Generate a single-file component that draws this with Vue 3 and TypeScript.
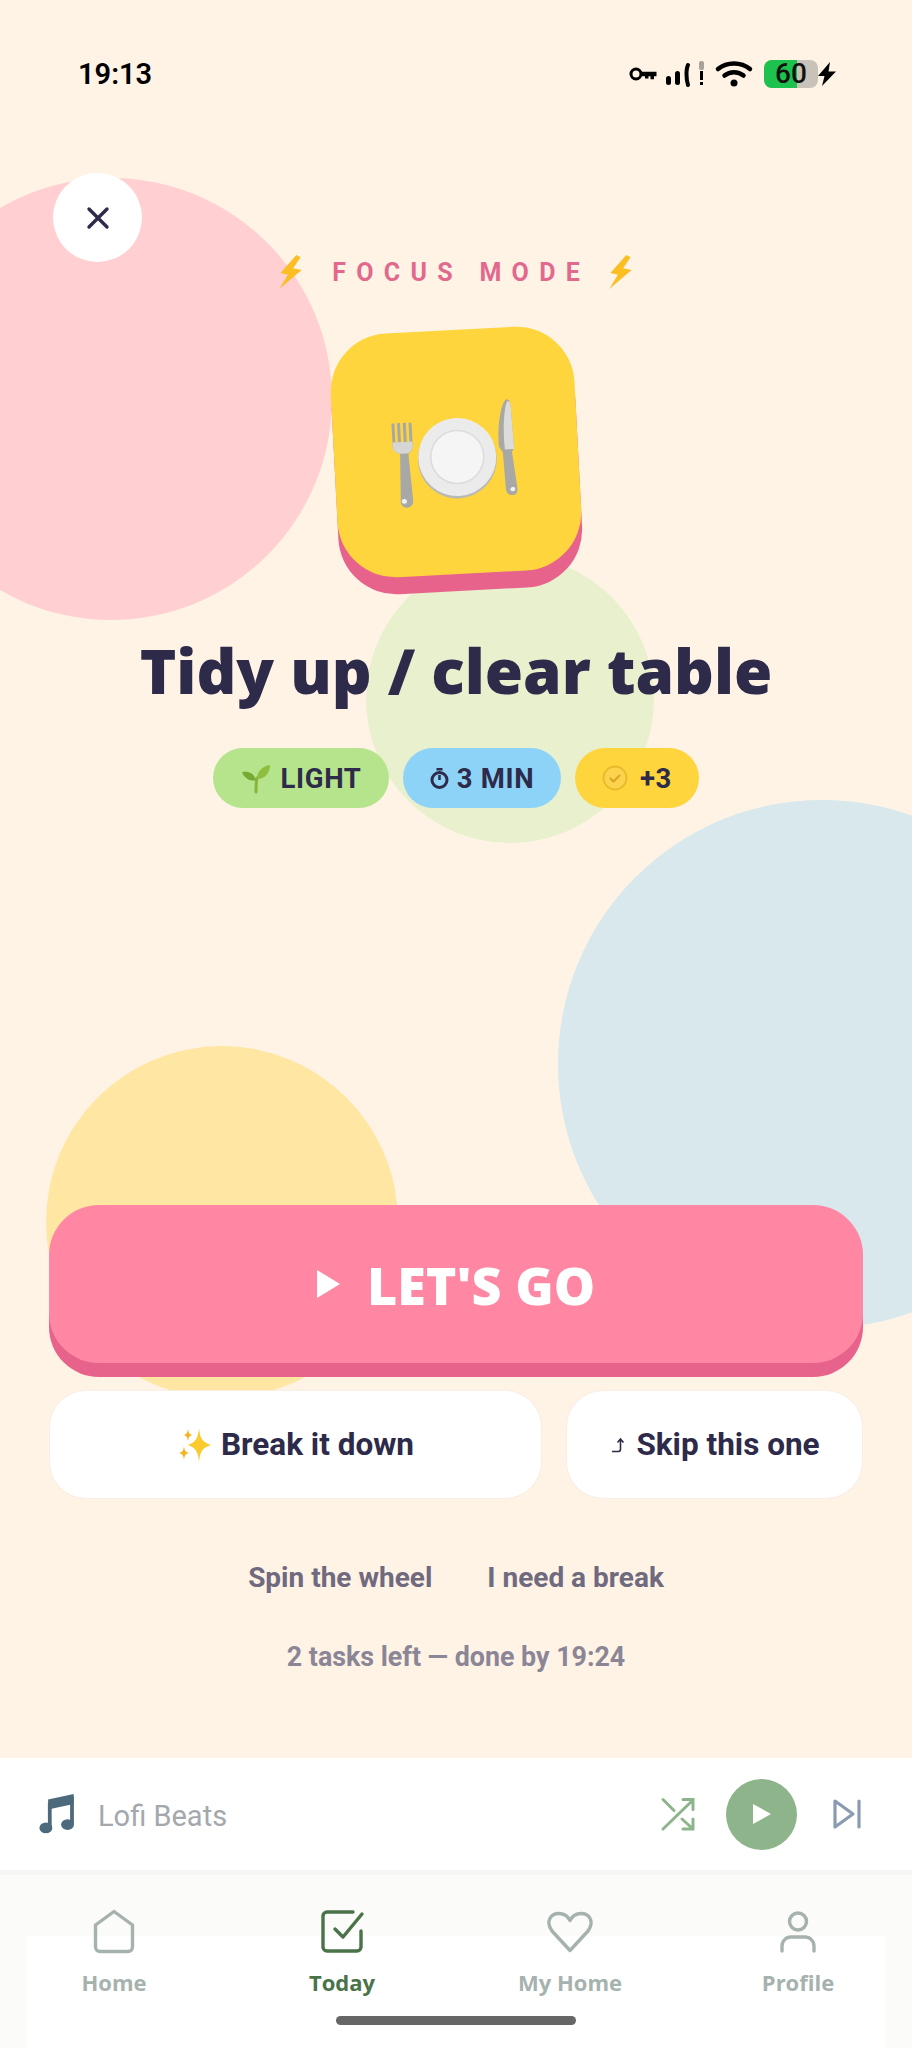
<script setup lang="ts">
const chips = [
  { label: 'LIGHT', kind: 'light', icon: 'sprout' },
  { label: '3 MIN', kind: 'time', icon: 'watch' },
  { label: '+3', kind: 'coin', icon: 'coin' },
];

const tabs = [
  { label: 'Home', icon: 'home', active: false },
  { label: 'Today', icon: 'today', active: true },
  { label: 'My Home', icon: 'heart', active: false },
  { label: 'Profile', icon: 'user', active: false },
];
</script>

<template>
  <div class="screen">
    <span class="blob blob-pink" />
    <span class="blob blob-green" />
    <span class="blob blob-blue" />
    <span class="blob blob-yellow" />

    <header class="status">
      <span class="clock">19:13</span>
      <div class="status-icons">
        <svg width="28" height="18" viewBox="0 0 28 18">
          <circle cx="7" cy="9" r="5" fill="none" stroke="#000" stroke-width="3" />
          <path d="M11 6.800h16.500v4.400H25v3h-3.500v-3h-2v2.200H16v-2.200h-5z" fill="#000" />
        </svg>
        <svg width="40" height="26" viewBox="0 0 40 26">
          <rect x="0" y="15" width="5" height="9" rx="2.500" fill="#000" />
          <rect x="9" y="10" width="5" height="14" rx="2.500" fill="#000" />
          <path d="M22 4c-2 4-2 14 0 20" fill="none" stroke="#000" stroke-width="4" stroke-linecap="round" />
          <rect x="33" y="0" width="5" height="9" rx="2" fill="#a9a29b" />
          <rect x="34" y="10" width="3" height="9" fill="#000" />
          <rect x="34" y="21" width="3" height="3" fill="#000" />
        </svg>
        <svg width="38" height="28" viewBox="0 0 38 28">
          <path d="M3 9c9-7.500 23-7.500 32 0M9.500 15.500c5.500-4.500 13.500-4.500 19 0" fill="none" stroke="#000" stroke-width="4.500" stroke-linecap="round" />
          <circle cx="19" cy="23" r="3.500" fill="#000" />
        </svg>
        <div class="battery"><span class="battery-fill" /><span class="battery-num">60</span></div>
        <svg class="bolt" width="18" height="24" viewBox="0 0 18 24"><path d="M12 0 0 14h6.500L4 24 18 9.500h-7.500z" fill="#000" /></svg>
      </div>
    </header>

    <button class="close" aria-label="Close">
      <svg width="24" height="24" viewBox="0 0 24 24"><path d="M3 3l18 18M21 3 3 21" stroke="#2d2a4a" stroke-width="3.400" stroke-linecap="round" /></svg>
    </button>

    <main class="focus">
      <div class="mode">
        <svg width="28" height="34" viewBox="0 0 26 32"><path d="M18 0 3 17l7 1.500L2 32l21-18-8-1.500L22 2z" fill="#fbbf24" /></svg>
        <span>FOCUS MODE</span>
        <svg width="28" height="34" viewBox="0 0 26 32"><path d="M18 0 3 17l7 1.500L2 32l21-18-8-1.500L22 2z" fill="#fbbf24" /></svg>
      </div>

      <div class="tile">
        <svg class="plate-set" width="120" height="100" viewBox="0 0 120 100">
          <!-- fork -->
          <g transform="translate(-3 -6) scale(1.18 1.06)">
            <path d="M0 20h2.500v18h2.200V20h2.600v18h2.300V20h2.600v18h2.300V20H17v22c0 4-2 6-4 7l2 44c.4 4-2 7-5.500 7S4 97 4.500 93L6 49c-3-1-6-3-6-7z" fill="#a8a8a6" />
            <path d="M0 38h17v4c0 4-2 6-5 7H6c-3-1-6-3-6-7z" fill="#d6d6d4" />
            <circle cx="7.500" cy="94" r="2.200" fill="#f1f1f1" />
          </g>
          <!-- plate -->
          <circle cx="61" cy="54" r="39.500" fill="#b9b9b5" />
          <circle cx="61" cy="52" r="39" fill="#ebebeb" />
          <circle cx="61" cy="52" r="26.500" fill="#f5f5f5" stroke="#dcdcdc" stroke-width="1.600" />
          <!-- knife -->
          <g transform="translate(-14 -3) scale(1.15 1)">
            <path d="M110 0c3 0 4 3 4 8l1 41-2 4 3 36c.5 4-1 7-4.500 7S106 93 106 89l-1-36-3-6c-1-14 2-40 8-47z" fill="#a8a8a6" />
            <path d="M111 2c3 0 3 3 3 7l1 41h-8c-1-13 0-38 4-48z" fill="#dcdcda" />
            <circle cx="112" cy="90" r="2.200" fill="#f1f1f1" />
          </g>
        </svg>
      </div>

      <h1 class="title">Tidy up / clear table</h1>

      <div class="chips">
        <span v-for="chip in chips" :key="chip.label" class="chip" :class="`chip-${chip.kind}`">
          <svg v-if="chip.icon === 'sprout'" width="32" height="30" viewBox="0 0 30 30">
            <path d="M15 29c0-8 0-10 1-14" fill="none" stroke="#8ab33a" stroke-width="3" stroke-linecap="round" />
            <path d="M15 17C12 9 7 8 1 9c2 6 8 10 14 8z" fill="#77a832" />
            <path d="M16 16c0-8 6-13 13-14 0 8-5 14-13 14z" fill="#8fbd3e" />
          </svg>
          <svg v-else-if="chip.icon === 'watch'" width="19" height="21" viewBox="0 0 19 21">
            <circle cx="9.500" cy="12" r="7.500" fill="none" stroke="#2d2a4a" stroke-width="3" />
            <rect x="6.500" y="0" width="6" height="2.500" fill="#2d2a4a" />
            <path d="M9.500 7v5" stroke="#2d2a4a" stroke-width="2.500" />
          </svg>
          <svg v-else width="26" height="26" viewBox="0 0 26 26">
            <circle cx="13" cy="13" r="11.500" fill="#fcd34d" stroke="#e9b92c" stroke-width="1.800" />
            <path d="M8.500 13.500l3 3 6-6" fill="none" stroke="#d9a520" stroke-width="2" stroke-linecap="round" stroke-linejoin="round" />
          </svg>
          {{ chip.label }}
        </span>
      </div>
    </main>

    <section class="actions">
      <button class="go">
        <svg width="23" height="28" viewBox="0 0 23 28"><path d="M0 0l23 14L0 28z" fill="#fff" /></svg>
        LET'S GO
      </button>
      <div class="secondary">
        <button class="ghost ghost-wide">
          <svg width="36" height="36" viewBox="0 0 34 36">
            <path d="M21 1c1 10 3 14 12 17-9 3-11 7-12 17-1-10-3-14-11-17 8-3 10-7 11-17z" fill="#fbcb2e" />
            <path d="M10 2c.6 4 1.600 5 4 6-2.400 1-3.400 2-4 6-.6-4-1.600-5-4-6 2.400-1 3.400-2 4-6z" fill="#f5b324" />
            <path d="M6 19c.6 5 1.600 6 5 7-3.400 1-4.400 2-5 7-.6-5-1.600-6-5-7 3.400-1 4.400-2 5-7z" fill="#f5b324" />
          </svg>
          Break it down
        </button>
        <button class="ghost ghost-narrow">
          <svg width="16" height="16" viewBox="0 0 16 16"><path d="M0 14.500h6.500c1.500 0 2-1 2-2.500V3M5.500 5.500 8.500 2l3 3.500" fill="none" stroke="#2d2a4a" stroke-width="1.600" /></svg>
          Skip this one
        </button>
      </div>
      <div class="links">
        <span>Spin the wheel</span>
        <span>I need a break</span>
      </div>
      <p class="left">2 tasks left — done by 19:24</p>
    </section>

    <section class="player">
      <svg width="36" height="40" viewBox="0 0 32 36">
        <path d="M8 5 31 0v9L8 14z" fill="#4d6a7d" />
        <path d="M9.500 8v22M29.500 2v25" stroke="#4d6a7d" stroke-width="3.400" />
        <ellipse cx="6" cy="30.500" rx="5.800" ry="4.800" fill="#4d6a7d" />
        <ellipse cx="25.500" cy="27.500" rx="5.800" ry="4.800" fill="#4d6a7d" />
      </svg>
      <span class="track">Lofi Beats</span>
      <svg width="34" height="34" viewBox="0 0 34 34">
        <path d="M2 32 32 3M22 2.500h10v10M2 2.500l11 11M21 22l11 10M32 22v10H22" fill="none" stroke="#8db48a" stroke-width="3" stroke-linecap="round" />
      </svg>
      <button class="play" aria-label="Play">
        <svg width="18" height="20" viewBox="0 0 18 20"><path d="M0 0l18 10L0 20z" fill="#fff" /></svg>
      </button>
      <svg width="30" height="32" viewBox="0 0 30 32">
        <path d="M3 3l18 13L3 29z" fill="none" stroke="#8a9ab3" stroke-width="3.200" stroke-linejoin="round" />
        <path d="M27 3v26" stroke="#8a9ab3" stroke-width="3.200" stroke-linecap="round" />
      </svg>
    </section>

    <nav class="tabs">
      <span class="sheet" />
      <div v-for="tab in tabs" :key="tab.label" class="tab" :class="{ active: tab.active }">
        <svg width="44" height="46" viewBox="0 0 44 46" fill="none" stroke="currentColor" stroke-width="3.400" stroke-linejoin="round" stroke-linecap="round">
          <path v-if="tab.icon === 'home'" d="M3.500 16 22 2.500 40.500 16v22a4.500 4.500 0 0 1-4.500 4.500H8A4.500 4.500 0 0 1 3.500 38z" />
          <template v-else-if="tab.icon === 'today'">
            <path d="M41 22v16a4 4 0 0 1-4 4H7a4 4 0 0 1-4-4V7a4 4 0 0 1 4-4h26" />
            <path d="M15 20l8 8L42 5" />
          </template>
          <path v-else-if="tab.icon === 'heart'" d="M22 41.500 4 22C-3 12 3 4.500 11 4.500c5 0 9 3 11 7 2-4 6-7 11-7 8 0 14 7.500 7 17.500z" />
          <template v-else>
            <circle cx="22" cy="12.500" r="8.500" />
            <path d="M6 42v-5c0-5 4-9 9-9h14c5 0 9 4 9 9v5" />
          </template>
        </svg>
        <span>{{ tab.label }}</span>
      </div>
      <span class="home-bar" />
    </nav>
  </div>
</template>

<style>
html,
body {
  margin: 0;
  background: #fff;
}
</style>

<style scoped>
.screen {
  position: relative;
  width: 912px;
  height: 2048px;
  overflow: hidden;
  background: #fff3e6;
  font-family: Roboto, "Liberation Sans", sans-serif;
  color: #2d2a4a;
  display: flex;
  flex-direction: column;
}
button {
  border: 0;
  font: inherit;
  color: inherit;
  padding: 0;
}
svg {
  overflow: visible;
  flex: none;
}
.blob {
  position: absolute;
  border-radius: 50%;
}
.blob-pink {
  left: -110px;
  top: 178px;
  width: 442px;
  height: 442px;
  background: #ffcfd2;
}
.blob-green {
  left: 366px;
  top: 555px;
  width: 288px;
  height: 288px;
  background: #e8f0cd;
}
.blob-blue {
  left: 558px;
  top: 800px;
  width: 528px;
  height: 528px;
  background: #d8e8ec;
}
.blob-yellow {
  left: 46px;
  top: 1046px;
  width: 352px;
  height: 352px;
  background: #ffe7a3;
}
.status {
  position: relative;
  height: 178px;
  flex: none;
  display: flex;
  justify-content: space-between;
  align-items: flex-start;
  padding: 56px 76px 0 78px;
  box-sizing: border-box;
}
.clock {
  font-size: 29px;
  font-weight: 600;
  line-height: 36px;
  color: #000;
}
.status-icons {
  display: flex;
  align-items: center;
  gap: 9px;
  height: 36px;
}
.battery {
  position: relative;
  width: 54px;
  height: 28px;
  border-radius: 8px;
  background: #c9c2b9;
  margin-left: 2px;
  text-align: center;
  font-size: 28px;
  line-height: 28px;
  font-weight: 500;
  color: #111;
}
.battery-fill {
  position: absolute;
  left: 0;
  top: 0;
  bottom: 0;
  width: 33px;
  border-radius: 8px 0 0 8px;
  background: #1cc24d;
}
.battery-num {
  position: relative;
}
.bolt {
  margin-left: -9px;
}
.close {
  position: absolute;
  left: 53px;
  top: 173px;
  width: 89px;
  height: 89px;
  border-radius: 50%;
  background: #fff;
  display: flex;
  align-items: center;
  justify-content: center;
}
.focus {
  position: relative;
  height: 630px;
  flex: none;
  display: flex;
  flex-direction: column;
  align-items: center;
}
.mode {
  margin-top: 77px;
  display: flex;
  align-items: center;
  gap: 27px;
  height: 34px;
  color: #e3688e;
  font-size: 25px;
  font-weight: 700;
  letter-spacing: 10.300px;
}
.mode span {
  margin-right: -10.300px;
}
.tile {
  margin-top: 41px;
  width: 244px;
  height: 244px;
  border-radius: 58px;
  background: #ffd53d;
  box-shadow: 0 17px 0 #e8638c;
  transform: rotate(-3deg);
  display: flex;
  align-items: center;
  justify-content: center;
}
.plate-set {
  margin-top: 6px;
}
.title {
  margin: 56px 0 0;
  font-family: "Open Sans", sans-serif;
  font-size: 62px;
  font-weight: 800;
  line-height: 80px;
  color: #2d2a4a;
}
.chips {
  margin-top: 38px;
  display: flex;
  gap: 14px;
}
.chip {
  height: 60px;
  border-radius: 30px;
  display: flex;
  align-items: center;
  justify-content: center;
  gap: 8px;
  font-size: 27.500px;
  font-weight: 700;
  letter-spacing: 0.700px;
  box-sizing: border-box;
}
.chip-light {
  width: 176px;
  background: #b5e48c;
}
.chip-time {
  width: 158px;
  background: #8dd3f7;
}
.chip-coin {
  width: 124px;
  background: #ffd53d;
  gap: 12px;
}
.actions {
  position: relative;
  flex: 1;
  padding: 397px 49px 0 49px;
  display: flex;
  flex-direction: column;
  align-items: stretch;
}
.go {
  height: 158px;
  flex: none;
  border-radius: 50px;
  background: #ff87a3;
  box-shadow: 0 14px 0 #e8638c;
  color: #fff;
  display: flex;
  align-items: center;
  justify-content: center;
  gap: 27px;
  font-family: "Open Sans", sans-serif;
  font-size: 52px;
  font-weight: 800;
}
.secondary {
  margin-top: 28px;
  padding: 0 1px;
  display: flex;
  justify-content: space-between;
}
.ghost {
  height: 107px;
  border-radius: 36px;
  background: #fff;
  box-shadow: 0 0 0 1px #f7eee4;
  display: flex;
  align-items: center;
  justify-content: center;
  gap: 8px;
  font-size: 31.500px;
  font-weight: 700;
}
.ghost-wide {
  width: 491px;
}
.ghost-narrow {
  width: 295px;
  padding-left: 3px;
  box-sizing: border-box;
}
.links {
  margin-top: 64px;
  display: flex;
  justify-content: center;
  gap: 55px;
  font-size: 28px;
  font-weight: 700;
  line-height: 32px;
  color: #6f6a7e;
}
.left {
  margin: 47px 0 0;
  text-align: center;
  font-size: 26.800px;
  font-weight: 700;
  line-height: 32px;
  color: #8b8696;
}
.player {
  position: absolute;
  left: 0;
  right: 0;
  top: 1758px;
  height: 112px;
  background: #fff;
  display: flex;
  align-items: center;
  padding: 0 50px 0 39px;
  box-sizing: border-box;
}
.track {
  margin-left: 23px;
  padding-top: 4px;
  flex: 1;
  font-size: 29px;
  color: #a4a8ad;
}
.play {
  margin: 0 35px 0 31px;
  width: 71px;
  height: 71px;
  border-radius: 50%;
  background: #8db48a;
  display: flex;
  align-items: center;
  justify-content: center;
}
.tabs {
  position: absolute;
  left: 0;
  right: 0;
  top: 1870px;
  bottom: 0;
  background: #fbfbfa;
  border-top: 5px solid #f5f5f4;
  display: grid;
  grid-template-columns: repeat(4, 228px);
  justify-content: center;
}
.sheet {
  position: absolute;
  left: 27px;
  right: 27px;
  top: 61px;
  bottom: 0;
  background: #fff;
}
.tab {
  position: relative;
  padding-top: 34px;
  display: flex;
  flex-direction: column;
  align-items: center;
  gap: 12px;
  color: #a6b2ae;
  font-size: 22px;
  font-weight: 700;
  font-family: "Open Sans", sans-serif;
}
.tab.active {
  color: #4a7349;
}
.home-bar {
  position: absolute;
  left: 336px;
  top: 141px;
  width: 240px;
  height: 9px;
  border-radius: 5px;
  background: #666;
}
</style>
